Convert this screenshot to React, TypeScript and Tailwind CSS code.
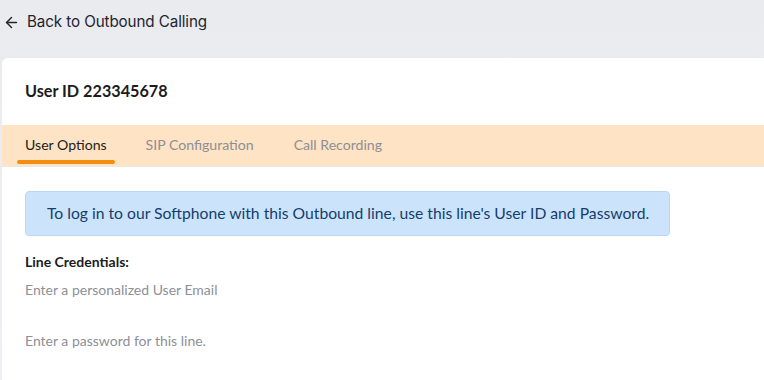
import React from "react";

export default function App() {
  return (
    <div className="w-[764px] h-[380px] overflow-hidden bg-gradient-to-b from-[#e9ebee] to-[#eceff3] flex flex-col" style={{ fontFamily: "Lato, 'Noto Sans', sans-serif" }}>
      <div className="h-[58px] flex items-center pl-[3px] pb-[13px] text-[15.2px] text-[#1f2430]" style={{ fontFamily: "Inter, sans-serif" }}>
        <svg width="17" height="17" viewBox="0 0 24 24" fill="none" stroke="#1f2430" strokeWidth="2" strokeLinecap="round" strokeLinejoin="round" className="mr-[7px]">
          <path d="M19 12H5" />
          <path d="M12 19l-7-7 7-7" />
        </svg>
        <span className="tracking-[-0.1px]">Back to Outbound Calling</span>
      </div>
      <div className="flex-1 ml-[2px] bg-white rounded-tl-[6px] flex flex-col">
        <div className="h-[67px] flex items-center pl-[23px] text-[16.2px] font-bold text-[#1c1c1c]">User ID 223345678</div>
        <div className="h-[42px] bg-[#fee3c4] border-b border-[#e7e8ea] flex items-stretch pl-[15px] text-[14.1px]">
          <div className="relative px-[8px] flex items-center text-[#222] pb-[1px]">
            User Options
            <div className="absolute left-0 right-0 bottom-[2px] h-[4px] rounded-full bg-[#f28d0f]" />
          </div>
          <div className="ml-[23px] px-[8px] flex items-center text-[#8d8f94] pb-[1px]">SIP Configuration</div>
          <div className="ml-[24px] px-[8px] flex items-center text-[#8d8f94] pb-[1px]">Call Recording</div>
        </div>
        <div className="pl-[23px] pt-[24px]">
          <div className="w-[645px] h-[45px] bg-[#cbe4fc] border border-[#b9d8f6] rounded-[4px] flex items-center pl-[21px] text-[15.7px] text-[#163d6c]">
            To log in to our Softphone with this Outbound line, use this line's User ID and Password.
          </div>
          <div className="mt-[16px] text-[14px] leading-[20px] font-bold text-[#1c1c1c]">Line Credentials:</div>
          <div className="mt-[8px] text-[14px] leading-[20px] text-[#8d9096]">Enter a personalized User Email</div>
          <div className="mt-[31px] text-[14px] leading-[20px] text-[#8d9096]">Enter a password for this line.</div>
        </div>
      </div>
    </div>
  );
}
